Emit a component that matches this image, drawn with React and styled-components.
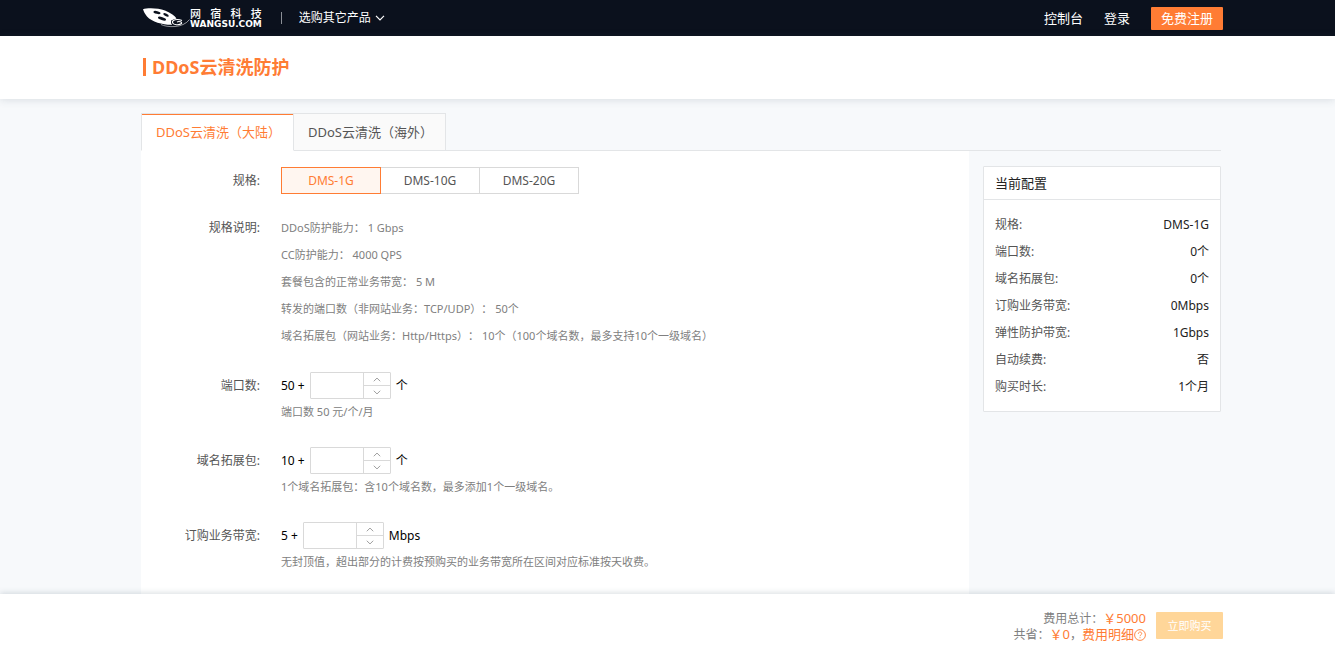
import React from "react";
import styled, { createGlobalStyle } from "styled-components";

const tabs = ["DDoS云清洗（大陆）", "DDoS云清洗（海外）"];

const specs = ["DMS-1G", "DMS-10G", "DMS-20G"];

const details = [
    ["DDoS防护能力：", "1 Gbps"],
    ["CC防护能力：", "4000 QPS"],
    ["套餐包含的正常业务带宽：", "5 M"],
    ["转发的端口数（非网站业务：TCP/UDP）：", "50个"],
    ["域名拓展包（网站业务：Http/Https）：", "10个（100个域名数，最多支持10个一级域名）"],
];

const amounts = [
    { id: "ports", label: "端口数:", base: 50, unit: "个", hint: "端口数 50 元/个/月" },
    { id: "domains", label: "域名拓展包:", base: 10, unit: "个", hint: "1个域名拓展包：含10个域名数，最多添加1个一级域名。" },
    { id: "bandwidth", label: "订购业务带宽:", base: 5, unit: "Mbps", hint: "无封顶值，超出部分的计费按预购买的业务带宽所在区间对应标准按天收费。" },
];

export default function App() {

    const [tab, setTab] = React.useState(0)

    const [spec, setSpec] = React.useState("DMS-1G")

    const [values, setValues] = React.useState({})

    function changeValue(id, value) {
        setValues({ ...values, [id]: value })
    }

    function step(id, delta) {
        changeValue(id, Math.max(0, Number(values[id] || 0) + delta))
    }

    const summary = [
        ["规格:", spec],
        ["端口数:", `${values.ports || 0}个`],
        ["域名拓展包:", `${values.domains || 0}个`],
        ["订购业务带宽:", `${values.bandwidth || 0}Mbps`],
        ["弹性防护带宽:", "1Gbps"],
        ["自动续费:", "否"],
        ["购买时长:", "1个月"],
    ]

    return (
        <>
            <GlobalStyle />
            <Page>
                <TopBar>
                    <TopContent>
                        <Logo />
                        <Divider />
                        <ProductMenu type="button">
                            选购其它产品
                            <Chevron width="10" height="6" />
                        </ProductMenu>
                        <TopLinks>
                            <a href="#console">控制台</a>
                            <a href="#login">登录</a>
                            <Register type="button">免费注册</Register>
                        </TopLinks>
                    </TopContent>
                </TopBar>
                <TitleBar>
                    <Container>
                        <h1>DDoS云清洗防护</h1>
                    </Container>
                </TitleBar>
                <Main>
                    <Container>
                        <Tabs role="tablist">
                            {tabs.map((name, i) => (
                                <Tab key={name} type="button" role="tab" aria-selected={tab === i} $active={tab === i} onClick={() => setTab(i)}>{name}</Tab>
                            ))}
                        </Tabs>
                        <Columns>
                            <Form>
                                <Field $gap="20px">
                                    <FieldName as="span">规格:</FieldName>
                                    <Options>
                                        {specs.map((name) => (
                                            <Option key={name} type="button" $active={spec === name} onClick={() => setSpec(name)}>{name}</Option>
                                        ))}
                                    </Options>
                                </Field>
                                <Field $gap="23px">
                                    <FieldName as="span">规格说明:</FieldName>
                                    <Details>
                                        {details.map(([name, value]) => (
                                            <li key={name}>{name} {value}</li>
                                        ))}
                                    </Details>
                                </Field>
                                {amounts.map((a) => (
                                    <Field key={a.id}>
                                        <FieldName htmlFor={a.id}>{a.label}</FieldName>
                                        <div>
                                            <Amount>
                                                <span>{a.base} +</span>
                                                <Stepper>
                                                    <input id={a.id} value={values[a.id] || ""} onChange={(e) => changeValue(a.id, e.target.value)} />
                                                    <Arrows>
                                                        <Arrow type="button" aria-label="+" onClick={() => step(a.id, 1)}><Chevron up width="8" height="5" /></Arrow>
                                                        <Arrow type="button" aria-label="-" onClick={() => step(a.id, -1)}><Chevron width="8" height="5" /></Arrow>
                                                    </Arrows>
                                                </Stepper>
                                                <span>{a.unit}</span>
                                            </Amount>
                                            <Hint>{a.hint}</Hint>
                                        </div>
                                    </Field>
                                ))}
                            </Form>
                            <Summary>
                                <h2>当前配置</h2>
                                <dl>
                                    {summary.map(([name, value]) => (
                                        <div key={name}>
                                            <dt>{name}</dt>
                                            <dd>{value}</dd>
                                        </div>
                                    ))}
                                </dl>
                            </Summary>
                        </Columns>
                    </Container>
                </Main>
                <Footer>
                    <FooterContent>
                        <Totals>
                            <p>费用总计：<strong>￥5000</strong></p>
                            <p>共省：<strong>￥0</strong>，<a href="#detail">费用明细<HelpIcon /></a></p>
                        </Totals>
                        <Buy type="button" disabled>立即购买</Buy>
                    </FooterContent>
                </Footer>
            </Page>
        </>
    )
};

function Chevron({ up, width, height }) {
    return (
        <svg width={width} height={height} viewBox="0 0 10 6" fill="none" stroke="currentColor" aria-hidden="true">
            <path d={up ? "M1 5.2 5 1.2 9 5.2" : "M1 .8 5 4.8 9 .8"} strokeWidth="1.2" />
        </svg>
    )
}

function HelpIcon() {
    return (
        <svg width="12" height="12" viewBox="0 0 12 12" fill="none" stroke="currentColor" aria-hidden="true">
            <circle cx="6" cy="6" r="5.4" strokeWidth=".9" />
            <path d="M4.3 4.8C4.3 2.5 7.7 2.5 7.7 4.6 7.7 5.8 6 5.9 6 7.2M6 8.2V9.2" strokeWidth=".9" />
        </svg>
    )
}

function Logo() {
    return (
        <Brand href="#home" aria-label="网宿科技 WANGSU.COM">
            <svg width="47" height="20" viewBox="0 0 47 20" aria-hidden="true">
                <path fill="#fff" d="M0 1.2C4-.3 15-.3 22 2.6 28 5 32 8 33.5 10.500L28 12.500 29 16.800C20 17 9 14 4 8.500 2 6 .5 3 0 1.200Z" />
                <g fill="#0b111d">
                    <ellipse cx="14" cy="4.500" rx="3.600" ry="1.400" transform="rotate(12 14 4.500)" />
                    <ellipse cx="23" cy="6.800" rx="3" ry="1.300" transform="rotate(28 23 6.800)" />
                    <ellipse cx="19" cy="10.600" rx="4.200" ry="1.500" transform="rotate(18 19 10.600)" />
                    <ellipse cx="34" cy="14.400" rx="6" ry="3.500" />
                </g>
                <g fill="none" stroke="#fff">
                    <path strokeWidth="1.100" d="M39 12.500C34 10.500 29 12 29.500 14.500 30 17 36 17.500 38.500 15.500 39.500 14 36 13 34 14" />
                    <path strokeWidth=".8" opacity=".7" d="M18 16.500C24 19.500 40 20.500 46.500 11.500" />
                </g>
            </svg>
            <BrandName>
                <BrandChars>
                    <span>网</span>
                    <span>宿</span>
                    <span>科</span>
                    <span>技</span>
                </BrandChars>
                <b>WANGSU.COM</b>
            </BrandName>
        </Brand>
    )
}


const GlobalStyle = createGlobalStyle`
    *{
        box-sizing:border-box;
    }
    body{
        margin:0;
        background-color:#f7f9fb;
        font-family:'Noto Sans', 'Noto Sans CJK SC', sans-serif;
        font-size:12px;
        line-height:16px;
        text-spacing-trim:space-all;
        color:#000;
    }
    h1, h2, p, dl, dd, ul{
        margin:0;
        padding:0;
    }
    button, input{
        font:inherit;
        padding:0;
    }
    button{
        cursor:pointer;
        white-space:nowrap;
    }
    a{
        text-decoration:none;
    }
`;

const Page = styled.div`
    height:100vh;
    display:flex;
    flex-direction:column;
`;

const Container = styled.div`
    width:100%;
    max-width:1109px;
    margin:0 auto;
    padding-left:28px;
`;

const TopBar = styled.header`
    flex:none;
    height:36px;
    background-color:#0b111d;
    color:#fff;
`;

const TopContent = styled(Container)`
    height:100%;
    max-width:1111px;
    padding-left:31px;
    display:flex;
    align-items:center;
`;

const Brand = styled.a`
    display:flex;
    align-items:center;
    color:#fff;
`;

const BrandName = styled.span`
    display:flex;
    flex-direction:column;
    b{
        font-family:'DejaVu Sans', sans-serif;
        font-size:9px;
        line-height:10px;
    }
`;

const BrandChars = styled.span`
    display:flex;
    justify-content:space-between;
    font-size:11px;
    font-weight:500;
    line-height:11px;
`;

const Divider = styled.span`
    width:1px;
    height:12px;
    margin:0 17px 0 19px;
    background-color:#8b8f96;
`;

const ProductMenu = styled.button`
    display:flex;
    align-items:center;
    gap:4px;
    border:none;
    background:none;
    color:#fff;
`;

const TopLinks = styled.nav`
    margin-left:auto;
    display:flex;
    align-items:center;
    gap:21px;
    font-size:13px;
    a{
        color:#fff;
    }
`;

const Register = styled.button`
    width:72px;
    height:23px;
    border:none;
    border-radius:1px;
    background-color:#ff7c34;
    color:#fff;
`;

const TitleBar = styled.div`
    flex:none;
    height:63px;
    display:flex;
    align-items:center;
    position:relative;
    background-color:#fff;
    box-shadow:0 1px 8px rgba(60, 80, 100, 0.16);
    h1{
        margin:0 0 2px 2px;
        padding-left:6px;
        border-left:3px solid #ff7c34;
        font-size:18px;
        line-height:18px;
        color:#ff7c34;
    }
`;

const Main = styled.main`
    flex:1;
    min-height:0;
    padding-top:14px;
    overflow:hidden;
`;

const Tabs = styled.div`
    display:flex;
    height:38px;
    margin-right:1px;
    border-bottom:1px solid #e3e5e7;
`;

const Tab = styled.button`
    height:38px;
    padding:0 12px 0 14px;
    border:1px solid #e3e5e7;
    border-left-width:${props => props.$active ? '1px' : '0'};
    border-bottom-color:${props => props.$active ? '#fff' : '#e3e5e7'};
    box-shadow:${props => props.$active ? 'inset 0 1px #ff7c34' : 'none'};
    background-color:${props => props.$active ? '#fff' : '#fafafa'};
    color:${props => props.$active ? '#ff7c34' : '#555'};
    font-size:13px;
`;

const Columns = styled.div`
    display:flex;
    align-items:flex-start;
    gap:14px;
`;

const Form = styled.div`
    flex:1;
    min-height:520px;
    padding-top:16px;
    background-color:#fff;
`;

const Field = styled.div`
    display:flex;
    margin-bottom:${props => props.$gap || '27px'};
`;

const FieldName = styled.label`
    flex:none;
    width:140px;
    padding-right:21px;
    line-height:27px;
    text-align:right;
    color:#555;
`;

const Options = styled.div`
    display:flex;
`;

const Option = styled.button`
    width:99px;
    height:27px;
    border:1px solid ${props => props.$active ? '#ff7c34' : '#d9d9d9'};
    background-color:${props => props.$active ? '#fff6f0' : '#fff'};
    color:${props => props.$active ? '#ff7c34' : '#555'};
    & + &{
        border-left:none;
    }
    &:first-child{
        width:100px;
    }
`;

const Details = styled.ul`
    list-style:none;
    font-size:11px;
    line-height:27px;
    color:#808080;
`;

const Amount = styled.div`
    display:flex;
    align-items:center;
    gap:5px;
`;

const Stepper = styled.div`
    width:81px;
    height:27px;
    display:flex;
    border:1px solid #d9d9d9;
    border-radius:1px;
    background-color:#fff;
    input{
        flex:1;
        min-width:0;
        border:none;
        outline:none;
        background:none;
        padding:0 6px;
    }
`;

const Arrows = styled.div`
    width:27px;
    display:flex;
    flex-direction:column;
    border-left:1px solid #d9d9d9;
`;

const Arrow = styled.button`
    flex:1;
    display:flex;
    align-items:center;
    justify-content:center;
    border:none;
    background:none;
    color:#999;
    & + &{
        border-top:1px solid #d9d9d9;
    }
`;

const Hint = styled.p`
    padding-top:5px;
    font-size:11px;
    color:#808080;
`;

const Summary = styled.aside`
    width:238px;
    flex:none;
    margin:15px 1px 0 0;
    border:1px solid #e3e5e7;
    border-radius:1px;
    background-color:#fff;
    h2{
        padding:0 11px;
        border-bottom:1px solid #e3e5e7;
        font-size:13px;
        font-weight:400;
        line-height:32px;
        color:#222;
    }
    dl{
        padding:11px;
    }
    dl div{
        display:flex;
        justify-content:space-between;
        line-height:27px;
    }
    dt{
        color:#555;
    }
    dd{
        color:#222;
    }
`;

const Footer = styled.footer`
    flex:none;
    height:58px;
    position:relative;
    background-color:#fff;
    box-shadow:0 -1px 6px rgba(60, 80, 100, 0.2);
`;

const FooterContent = styled(Container)`
    height:100%;
    max-width:1111px;
    display:flex;
    align-items:center;
    justify-content:flex-end;
    gap:10px;
    padding-top:5px;
`;

const Totals = styled.div`
    padding-top:2px;
    text-align:right;
    color:#808080;
    strong, a{
        font-size:13px;
        font-weight:400;
        line-height:1;
        color:#ff7c34;
    }
    svg{
        vertical-align:-2px;
    }
`;

const Buy = styled.button`
    width:67px;
    height:27px;
    border:none;
    border-radius:1px;
    background-color:#ffd699;
    color:#fff;
    font-size:11px;
`;
